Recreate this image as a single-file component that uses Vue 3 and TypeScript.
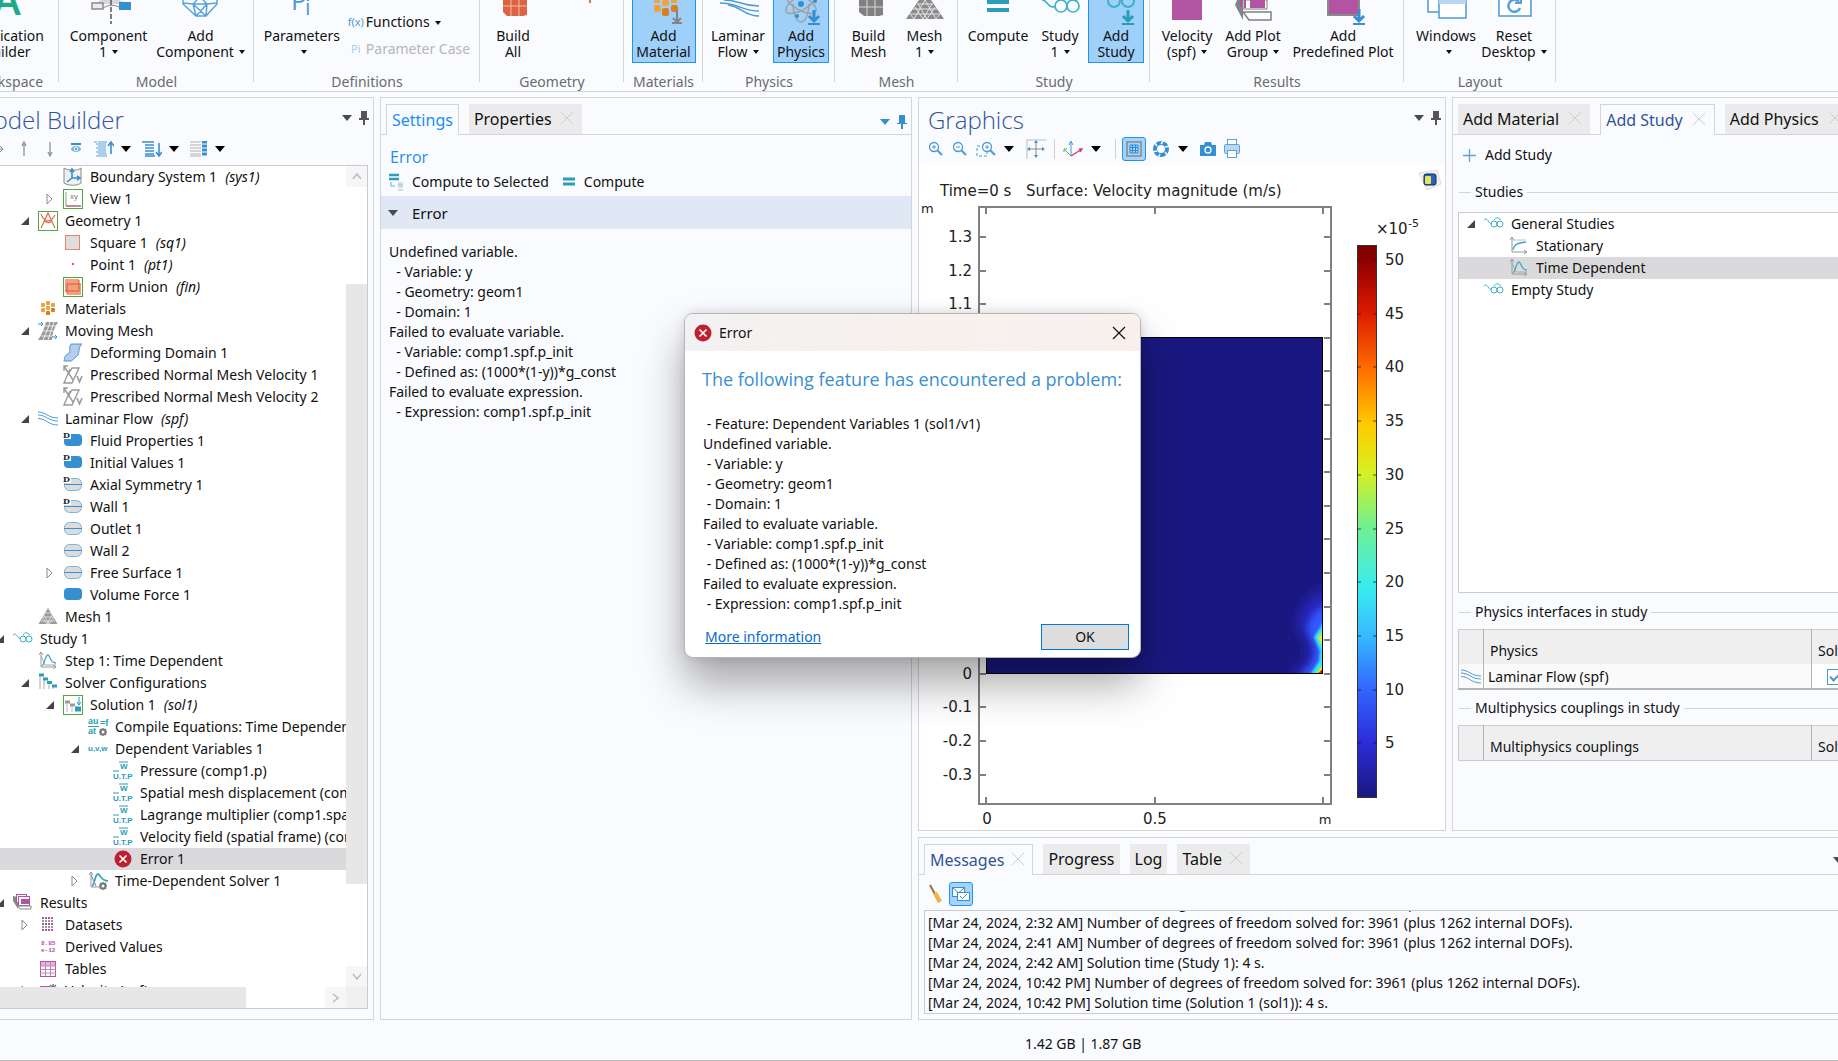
<script setup lang="ts">
import { ref } from 'vue'

interface RibbonButton {
  icon: string
  lines: string[]
  width: number
  caret?: boolean
  active?: boolean
}

interface RibbonGroup {
  label: string
  width: number
  buttons: RibbonButton[]
}

interface TreeNode {
  level: number
  icon: string
  label: string
  tag?: string
  state?: 'open' | 'closed'
  selected?: boolean
}

const ribbonIcons: Record<string, string> = {
  app: '<text x="24" y="15" font-family="Open Sans, sans-serif" font-size="42" font-weight="600" text-anchor="middle" fill="#22a98c">A</text>',
  component:
    '<path d="M8 4 L16 0 H34 L42 4" fill="#d7d7d7"/><rect x="7" y="3" width="11" height="6" fill="#ececec" stroke="#8a8a8a" stroke-width="1.5"/><path d="M18 8 Q26 3 34 7" fill="none" stroke="#8a8a8a"/><rect x="34" y="2" width="12" height="8" fill="#368fd0"/><path d="M26 0V24" stroke="#555" stroke-width="1.5" stroke-dasharray="5 2"/>',
  gem: '<path d="M6 0 L6 4 L19 16 H29 L40 4 V0 M6 3 L16 4 H30 L40 3 M16 4 L20 0 M30 4 L26 0 M16 4 L19 16 M30 4 L29 16 M16 4 L29 16 M30 4 L19 16" fill="none" stroke="#58a4dc" stroke-width="1.5"/>',
  pi: '<text x="13" y="10" font-family="Open Sans, sans-serif" font-size="26" fill="#4a9ad6">P</text><text x="27" y="15" font-family="Open Sans, sans-serif" font-size="22" fill="#4a9ad6">i</text>',
  building: '<path d="M14 0H38V15L34 16H18L14 12Z" fill="#dc6444"/><path d="M22 0V16 M30 0V16 M14 6H38" stroke="#f6b9a5" stroke-width="1"/>',
  tick: '<rect x="26" y="0" width="2" height="3" fill="#b98253"/>',
  material:
    '<g fill="#f0a33a"><rect x="14" y="0" width="6" height="3" rx="1"/><rect x="22" y="0" width="7" height="6" rx="2"/><rect x="31" y="0" width="6" height="3" rx="1"/><rect x="14" y="5" width="7" height="7" rx="2"/></g><g fill="#d8801f"><rect x="22" y="8" width="7" height="8" rx="2"/><rect x="31" y="5" width="7" height="7" rx="2"/></g><path d="M37 10V22 M33 18L37 22L41 18" fill="none" stroke="#808388" stroke-width="2"/><path d="M32 23H42" stroke="#808388" stroke-width="2"/>',
  flow: '<g fill="none" stroke="#4c9bd6" stroke-width="1.5"><path d="M10 0C26 0 26 6 45 6"/><path d="M6 3C24 3 28 11 45 11"/><path d="M14 5C28 7 30 16 45 16"/></g>',
  atom: '<g fill="none" stroke="#a0a0a0" stroke-width="1.5"><ellipse cx="24" cy="3" rx="17" ry="7" transform="rotate(30 24 3)"/><ellipse cx="24" cy="3" rx="17" ry="7" transform="rotate(-30 24 3)"/><path d="M16 4C17 28 31 28 32 4"/></g><circle cx="24" cy="4" r="3" fill="#368fd0"/><circle cx="20" cy="16" r="2" fill="#368fd0"/><circle cx="38" cy="1" r="2" fill="#368fd0"/><path d="M37 10V20 M32 16L37 21L42 16" fill="none" stroke="#368fd0" stroke-width="3"/><path d="M31 24H43" stroke="#368fd0" stroke-width="2"/>',
  buildmesh: '<path d="M14 0H38V15L34 16H19L14 12Z" fill="#808080"/><path d="M22 0V16 M30 0V16 M14 7H38" stroke="#d8d8d8" stroke-width="1"/>',
  mesh: '<path d="M18 0H30L43 19H5Z" fill="#8a8a8a"/><path d="M14 7L22 19L31 4 M34 7L26 19L17 4 M9 14H39 M12 9H36 M16 4H32 M9 14L13 19L24 0L35 19L39 14" fill="none" stroke="#e4e4e4" stroke-width="1"/>',
  equals: '<path d="M13 2H35 M13 10H35" stroke="#2a9db8" stroke-width="4"/>',
  glasses:
    '<g fill="none" stroke="#3fb0c8" stroke-width="1.7"><path d="M6 0C12 0 12 10 20 6"/><circle cx="25" cy="6" r="6"/><circle cx="37" cy="6" r="6"/><path d="M22 0C30 -3 36 -1 40 1"/></g>',
  addstudy:
    '<g fill="none" stroke="#3fb0c8" stroke-width="2"><circle cx="22" cy="1" r="6"/><circle cx="36" cy="1" r="6"/></g><path d="M36 10V20 M31 16L36 21L41 16" fill="none" stroke="#2a9db8" stroke-width="3"/><path d="M30 24H42" stroke="#2a9db8" stroke-width="2"/>',
  plot: '<rect x="9" y="0" width="30" height="20" fill="#b254a2"/>',
  plotgroup:
    '<path d="M6 5L14 20V0H8Z" fill="#808388"/><path d="M14 0H38V9H14Z" fill="#ffffff" stroke="#808080"/><path d="M12 0V7 M16 0V8" stroke="#b254a2" stroke-width="2"/><rect x="21" y="0" width="15" height="8" fill="#b254a2"/><path d="M14 12H42V20H20Z" fill="#fff" stroke="#808080" stroke-width="1.5"/>',
  predefined:
    '<rect x="9" y="-4" width="31" height="19" fill="#b254a2" stroke="#8a8a8a" stroke-width="2"/><path d="M40 9V20 M35 16L40 21L45 16" fill="none" stroke="#368fd0" stroke-width="3"/><path d="M34 24H46" stroke="#368fd0" stroke-width="2"/>',
  windows:
    '<rect x="6" y="-4" width="14" height="16" fill="#fff" stroke="#4a9ad6" stroke-width="1.5"/><rect x="17" y="-4" width="27" height="22" fill="#fff" stroke="#4a9ad6" stroke-width="1.5"/><rect x="17" y="0" width="27" height="4" fill="#b9d6f0"/>',
  reset:
    '<rect x="9" y="-6" width="32" height="22" fill="#fff" stroke="#4a9ad6" stroke-width="1.5"/><path d="M29 2A6 6 0 1 0 30 8" fill="none" stroke="#5a9fd8" stroke-width="2.5"/><path d="M25 3H31V-2" fill="none" stroke="#5a9fd8" stroke-width="2"/>',
}

const ribbon: RibbonGroup[] = [
  { label: 'Workspace', width: 59, buttons: [{ icon: 'app', lines: ['Application', 'Builder'], width: 80 }] },
  {
    label: 'Model',
    width: 195,
    buttons: [
      { icon: 'component', lines: ['Component', '1'], width: 82, caret: true },
      { icon: 'gem', lines: ['Add', 'Component'], width: 90, caret: true },
    ],
  },
  { label: 'Definitions', width: 226, buttons: [{ icon: 'pi', lines: ['Parameters', ''], width: 76, caret: true }] },
  {
    label: 'Geometry',
    width: 144,
    buttons: [
      { icon: 'building', lines: ['Build', 'All'], width: 64 },
      { icon: 'tick', lines: [], width: 72 },
    ],
  },
  { label: 'Materials', width: 79, buttons: [{ icon: 'material', lines: ['Add', 'Material'], width: 64, active: true }] },
  {
    label: 'Physics',
    width: 132,
    buttons: [
      { icon: 'flow', lines: ['Laminar', 'Flow'], width: 58, caret: true },
      { icon: 'atom', lines: ['Add', 'Physics'], width: 56, active: true },
    ],
  },
  {
    label: 'Mesh',
    width: 123,
    buttons: [
      { icon: 'buildmesh', lines: ['Build', 'Mesh'], width: 50 },
      { icon: 'mesh', lines: ['Mesh', '1'], width: 50, caret: true },
    ],
  },
  {
    label: 'Study',
    width: 192,
    buttons: [
      { icon: 'equals', lines: ['Compute'], width: 68 },
      { icon: 'glasses', lines: ['Study', '1'], width: 44, caret: true },
      { icon: 'addstudy', lines: ['Add', 'Study'], width: 56, active: true },
    ],
  },
  {
    label: 'Results',
    width: 254,
    buttons: [
      { icon: 'plot', lines: ['Velocity', '(spf)'], width: 58, caret: true },
      { icon: 'plotgroup', lines: ['Add Plot', 'Group'], width: 62, caret: true },
      { icon: 'predefined', lines: ['Add', 'Predefined Plot'], width: 106 },
    ],
  },
  {
    label: 'Layout',
    width: 152,
    buttons: [
      { icon: 'windows', lines: ['Windows', ''], width: 62, caret: true },
      { icon: 'reset', lines: ['Reset', 'Desktop'], width: 62, caret: true },
    ],
  },
]

const green = '<rect x="0.5" y="0.5" width="19" height="19" fill="#fff" stroke="#4ea83c"/>'
const badgeD = '<rect x="0" y="0" width="8" height="8" fill="#fff"/><text x="0" y="7" font-family="DejaVu Serif, serif" font-size="8" font-weight="700" fill="#222">D</text>'
const domain = '<rect x="1" y="3" width="18" height="12" rx="4" fill="#368fd0"/>'
const boundary = '<rect x="1.5" y="3.5" width="17" height="12" rx="5" fill="#dcdcdc" stroke="#7db2e0"/><path d="M1 9.5H19" stroke="#368fd0"/>'
const waves =
  '<g fill="none" stroke="#4c9bd6"><path d="M0 3C8 3 10 9 20 9"/><path d="M0 6C8 6 10 12 20 12"/><path d="M0 9.500C8 9.500 10 16 20 16"/></g>'
const specs =
  '<g fill="none" stroke="#3fb0c8"><path d="M0 6C4 2 4 11 8 9"/><circle cx="10" cy="10" r="3"/><circle cx="16" cy="10" r="3"/><path d="M10 6C12 3 14 3 17 6"/></g>'
const axes = '<path d="M3 1V16H18 M1 4L3 1L5 4 M15 14L18 16L15 18" fill="none" stroke="#9a9a9a"/>'
const curve = '<path d="M3 5L7 14L18 14" fill="none" stroke="#a8a8a8"/><path d="M4 15C7 13 7 4 10 4C12 4 12 12 18 12" fill="none" stroke="#3fa8c4" stroke-width="1.3"/>'
const gear = '<circle cx="15" cy="15" r="2.500" fill="none" stroke="#777" stroke-width="2"/><path d="M15 11V19 M11 15H19 M12 12L18 18 M18 12L12 18" stroke="#777" stroke-width="1.3"/><circle cx="15" cy="15" r="1.500" fill="#fff"/>'
const normalVelocity =
  '<path d="M7 4L1 18H9L16 3H9L6 8 M1 1L10 15 M1 6V1H5" fill="none" stroke="#9a9a9a" stroke-width="1.400"/><path d="M14 11L16.500 17L19 11" fill="none" stroke="#9a9a9a" stroke-width="1.600"/>'
const variable =
  '<g font-family="Liberation Sans, sans-serif" font-weight="700" fill="#2a9db8" font-size="8"><text x="7" y="8">W</text><text x="0" y="18">U.T.P</text></g><path d="M6 1H15 M0 10H6" stroke="#2a9db8"/>'

const icons: Record<string, string> = {
  boundarySystem:
    '<path d="M1 1V16C6 19 14 19 18 16V1C14 4 6 4 1 1Z" fill="#f0f0f0" stroke="#8a8a8a"/><path d="M9 3V11H17 M9 11L4 15 M7 5L9 2L11 5 M14 9L17 11L14 13" fill="none" stroke="#368fd0" stroke-width="1.600"/>',
  view: green + '<path d="M3 3V17H18" fill="none" stroke="#6fb75f"/><path d="M3 17H18" stroke="#d13a74"/><text x="7" y="10" font-family="Liberation Sans, sans-serif" font-size="8" fill="#777">xy</text>',
  geometry: green + '<path d="M3 17L10 2L17 17 M3 3C6 11 12 13 17 4 M6 10C9 12 12 12 14 10" fill="none" stroke="#df6d4e" stroke-width="1.200"/>',
  square: '<rect x="2.500" y="2.500" width="14" height="14" fill="#dedede" stroke="#e48468"/>',
  point: '<rect x="9" y="8" width="2" height="2" fill="#e05a33"/>',
  union: green + '<rect x="2" y="2" width="14" height="12" fill="#f2a080"/><rect x="4" y="7" width="14" height="11" fill="#f2a080"/><path d="M2 14H16V3 M4 17V7H18" fill="none" stroke="#e0562e"/>',
  materials:
    '<g fill="#f0a33a"><rect x="8" y="2" width="4" height="4" rx="1"/><rect x="3" y="4" width="4" height="4" rx="1"/><rect x="13" y="4" width="4" height="4" rx="1"/><rect x="3" y="9" width="4" height="4" rx="1"/><rect x="8" y="7" width="4" height="4" rx="1"/></g><g fill="#d8801f"><rect x="13" y="9" width="4" height="4" rx="1"/><rect x="8" y="12" width="4" height="4" rx="1"/></g>',
  movingMesh:
    '<path d="M8 1H20C16 8 15 10 14 19H0C4 13 6 8 8 1Z" fill="#9a9a9a"/><path d="M7 5H18 M5 10H16 M3 15H15 M12 1C10 8 8 12 5 19 M16 1C14 8 12 12 10 19" fill="none" stroke="#eee"/><path d="M0 3H5 M3 1L5 3L3 5 M14 16H19 M17 14L19 16L17 18" fill="none" stroke="#368fd0"/>',
  deforming: '<path d="M8 1H19C14 5 18 10 13 14C10 16 9 18 8 18H1C2 14 1 13 5 11C9 8 5 5 8 1Z" fill="#b7cde9" stroke="#4a94d4"/>',
  normalVelocity,
  waves,
  domain,
  domainD: domain + badgeD,
  boundary,
  boundaryD: boundary + badgeD,
  mesh: '<path d="M10 1L19.500 17H0.500Z" fill="#9a9a9a"/><path d="M6 8L11 17L16 10 M14 8L9 17L4 10 M5 10H15 M3 14H17 M7 6H13" fill="none" stroke="#ddd"/>',
  specs,
  timeStep: axes + curve,
  stationary: axes + '<path d="M4 4H17" stroke="#c4c4c4"/><path d="M4 14C5 8 9 7 17 6" fill="none" stroke="#3fa8c4" stroke-width="1.300"/>',
  solver: '<path d="M2 4V16 M6 6V16 M11 10V16 M15 12V16" stroke="#aaa"/><path d="M1 2H6 M5 6H10 M9 9.500H14 M14 13H19" stroke="#2a9db8" stroke-width="3"/>',
  solution: green + '<path d="M2 7H7 M7 10H12" stroke="#9a9a9a" stroke-width="3"/><path d="M4 8V17 M9 11V17" stroke="#bbb"/><path d="M12 14H18" stroke="#2a9db8" stroke-width="5"/><path d="M16 2V10 M14 7L16 10L18 7" fill="none" stroke="#2a9db8"/>',
  compile:
    '<g font-family="Liberation Sans, sans-serif" font-weight="700" fill="#2a9db8" font-size="9"><text x="0" y="7">au</text><text x="0" y="17">at</text><text x="12" y="9">=f</text></g><path d="M0 9.500H11" stroke="#2a9db8"/>' + gear,
  dependent: '<text x="0" y="12" font-family="Liberation Sans, sans-serif" font-size="8" font-weight="700" fill="#2a9db8">u,v,w</text>',
  variable,
  error: '<circle cx="10" cy="10" r="8.500" fill="#bf2030"/><path d="M6.500 6.500L13.500 13.500 M13.500 6.500L6.500 13.500" stroke="#fff" stroke-width="1.700"/>',
  timeSolver: axes + '<path d="M4 15C7 13 7 3 10 3C12 3 13 10 20 10" fill="none" stroke="#3fa8c4" stroke-width="1.800"/><path d="M3 4L8 15" stroke="#999" stroke-width="1.300"/>' + gear,
  results:
    '<path d="M0 8L5 16V4L0 3Z" fill="#8a8a8a"/><rect x="3.500" y="1.500" width="10" height="8" fill="#fff" stroke="#b254a2"/><rect x="5.500" y="3.500" width="11" height="9" fill="#fff" stroke="#b254a2"/><rect x="8" y="6" width="8" height="5" fill="#b254a2"/><path d="M5 13H18V16H7Z" fill="#fff" stroke="#8a8a8a"/>',
  datasets: '<path d="M4 3H16 M4 9H16 M4 15H16" stroke="#b254a2" stroke-width="2" stroke-dasharray="2 1"/><path d="M4 6H16 M4 12H16" stroke="#999" stroke-width="2" stroke-dasharray="2 1"/>',
  derived: '<g font-family="Liberation Mono, monospace" font-weight="700" font-size="6" fill="#b254a2"><text x="3" y="8">8.85</text><text x="3" y="15">e-12</text></g>',
  tables: '<rect x="2.500" y="2.500" width="15" height="15" fill="#fff" stroke="#b254a2"/><rect x="3" y="3" width="14" height="4" fill="#dfb6d8"/><path d="M2 7H18 M2 10.500H18 M2 14H18 M7.500 3V17 M12.500 3V17" stroke="#c583bb"/>',
  velocity: '<rect x="2" y="5" width="10" height="10" fill="#b254a2"/><path d="M15 3V11 M11 7H19 M12 4L18 10 M18 4L12 10" stroke="#777" stroke-width="1.500"/>',
}

const tree: TreeNode[] = [
  { level: 2, icon: 'boundarySystem', label: 'Boundary System 1', tag: 'sys1' },
  { level: 2, icon: 'view', label: 'View 1', state: 'closed' },
  { level: 1, icon: 'geometry', label: 'Geometry 1', state: 'open' },
  { level: 2, icon: 'square', label: 'Square 1', tag: 'sq1' },
  { level: 2, icon: 'point', label: 'Point 1', tag: 'pt1' },
  { level: 2, icon: 'union', label: 'Form Union', tag: 'fin' },
  { level: 1, icon: 'materials', label: 'Materials' },
  { level: 1, icon: 'movingMesh', label: 'Moving Mesh', state: 'open' },
  { level: 2, icon: 'deforming', label: 'Deforming Domain 1' },
  { level: 2, icon: 'normalVelocity', label: 'Prescribed Normal Mesh Velocity 1' },
  { level: 2, icon: 'normalVelocity', label: 'Prescribed Normal Mesh Velocity 2' },
  { level: 1, icon: 'waves', label: 'Laminar Flow', tag: 'spf', state: 'open' },
  { level: 2, icon: 'domainD', label: 'Fluid Properties 1' },
  { level: 2, icon: 'domainD', label: 'Initial Values 1' },
  { level: 2, icon: 'boundaryD', label: 'Axial Symmetry 1' },
  { level: 2, icon: 'boundaryD', label: 'Wall 1' },
  { level: 2, icon: 'boundary', label: 'Outlet 1' },
  { level: 2, icon: 'boundary', label: 'Wall 2' },
  { level: 2, icon: 'boundary', label: 'Free Surface 1', state: 'closed' },
  { level: 2, icon: 'domain', label: 'Volume Force 1' },
  { level: 1, icon: 'mesh', label: 'Mesh 1' },
  { level: 0, icon: 'specs', label: 'Study 1', state: 'open' },
  { level: 1, icon: 'timeStep', label: 'Step 1: Time Dependent' },
  { level: 1, icon: 'solver', label: 'Solver Configurations', state: 'open' },
  { level: 2, icon: 'solution', label: 'Solution 1', tag: 'sol1', state: 'open' },
  { level: 3, icon: 'compile', label: 'Compile Equations: Time Dependent' },
  { level: 3, icon: 'dependent', label: 'Dependent Variables 1', state: 'open' },
  { level: 4, icon: 'variable', label: 'Pressure (comp1.p)' },
  { level: 4, icon: 'variable', label: 'Spatial mesh displacement (comp1.spatial.disp)' },
  { level: 4, icon: 'variable', label: 'Lagrange multiplier (comp1.spatial.lm)' },
  { level: 4, icon: 'variable', label: 'Velocity field (spatial frame) (comp1.u)' },
  { level: 4, icon: 'error', label: 'Error 1', selected: true },
  { level: 3, icon: 'timeSolver', label: 'Time-Dependent Solver 1', state: 'closed' },
  { level: 0, icon: 'results', label: 'Results', state: 'open' },
  { level: 1, icon: 'datasets', label: 'Datasets', state: 'closed' },
  { level: 1, icon: 'derived', label: 'Derived Values' },
  { level: 1, icon: 'tables', label: 'Tables' },
  { level: 1, icon: 'velocity', label: 'Velocity (spf)', state: 'closed' },
]

const studies: TreeNode[] = [
  { level: 0, icon: 'specs', label: 'General Studies', state: 'open' },
  { level: 1, icon: 'stationary', label: 'Stationary' },
  { level: 1, icon: 'timeStep', label: 'Time Dependent', selected: true },
  { level: 0, icon: 'specs', label: 'Empty Study' },
]

const errorText = `Undefined variable.
  - Variable: y
  - Geometry: geom1
  - Domain: 1
Failed to evaluate variable.
  - Variable: comp1.spf.p_init
  - Defined as: (1000*(1-y))*g_const
Failed to evaluate expression.
  - Expression: comp1.spf.p_init`

const dialogText = ' - Feature: Dependent Variables 1 (sol1/v1)\n' + errorText.replace(/^ {2}-/gm, ' -')

const messages = [
  '[Mar 24, 2024, 2:31 AM] Number of degrees of freedom solved for: 3961 (plus 1262 internal DOFs).',
  '[Mar 24, 2024, 2:32 AM] Number of degrees of freedom solved for: 3961 (plus 1262 internal DOFs).',
  '[Mar 24, 2024, 2:41 AM] Number of degrees of freedom solved for: 3961 (plus 1262 internal DOFs).',
  '[Mar 24, 2024, 2:42 AM] Solution time (Study 1): 4 s.',
  '[Mar 24, 2024, 10:42 PM] Number of degrees of freedom solved for: 3961 (plus 1262 internal DOFs).',
  '[Mar 24, 2024, 10:42 PM] Solution time (Solution 1 (sol1)): 4 s.',
]

const solveLaminar = ref(true)
const dialogOpen = ref(true)

const yTicks = Array.from({ length: 17 }, (_, i) => {
  const value = 13 - i
  return {
    y: Math.round(72 + i * 33.6),
    label: value % 10 === 0 ? String(value / 10) : (value / 10).toFixed(1),
    covered: value > 0 && value <= 10,
  }
})
const xTicks = [67, 236, 404]
const barTicks = [50, 45, 40, 35, 30, 25, 20, 15, 10, 5].map((value, i) => ({ value, y: Math.round(95 + i * 53.7) }))
const barStops = [
  ['0%', '#780000'],
  ['3%', '#900000'],
  ['12%', '#dc1a00'],
  ['22%', '#ff6a00'],
  ['32%', '#ffc800'],
  ['41%', '#d8f020'],
  ['51%', '#70f090'],
  ['62%', '#38ecf0'],
  ['71%', '#35b8ff'],
  ['80%', '#3268ff'],
  ['90%', '#2c2cd8'],
  ['100%', '#1a1880'],
]
</script>

<template>
  <div class="app">
    <header class="ribbon">
      <section v-for="group in ribbon" :key="group.label" class="group" :style="{ width: group.width + 'px' }">
        <div class="group-buttons" :class="{ clipped: group.label === 'Workspace' }">
          <button v-for="b in group.buttons" :key="b.icon" type="button" class="big" :class="{ active: b.active }" :style="{ width: b.width + 'px' }">
            <svg width="48" height="26" viewBox="0 0 48 26" v-html="ribbonIcons[b.icon]"></svg>
            <span v-for="(line, i) in b.lines" :key="i" class="big-line">{{ line }}<i v-if="b.caret && i === b.lines.length - 1" class="caret small"></i></span>
          </button>
          <div v-if="group.label === 'Definitions'" class="stack">
            <button type="button" class="inline-tool"><span class="glyph">f(x)</span>Functions<i class="caret small"></i></button>
            <button type="button" class="inline-tool" disabled><span class="glyph">Pi</span>Parameter Case</button>
          </div>
        </div>
        <div class="group-label">{{ group.label }}</div>
      </section>
    </header>

    <main class="desk">
      <section class="panel model">
        <div class="panel-head">
          <h2 class="model-title">Model Builder</h2>
          <span class="window-tools"><i class="caret dark"></i><svg class="pin" width="10" height="14" viewBox="0 0 10 14"><path d="M2 0H8V7H10V9H6V14H4V9H0V7H2Z" fill="#555" /></svg></span>
        </div>
        <div class="toolbar model-tools">
          <button type="button" class="step" aria-label="Forward"><svg width="16" height="16"><path d="M0 8H13 M10 5L13 8L10 11" fill="none" stroke="#8a8a8a" /></svg></button>
          <button type="button" class="step" aria-label="Move up"><svg width="16" height="16"><path d="M8 2V15 M6 5L8 1L10 5" fill="none" stroke="#999" stroke-width="1.4" /></svg></button>
          <button type="button" class="step" aria-label="Move down"><svg width="16" height="16"><path d="M8 1V14 M6 11L8 15L10 11" fill="none" stroke="#999" stroke-width="1.4" /></svg></button>
          <button type="button" class="step" aria-label="Show"><svg width="16" height="16"><path d="M3 3H13" stroke="#368fd0" stroke-width="2" /><ellipse cx="8" cy="8" rx="5" ry="3" fill="#7fb8e4" /><circle cx="8" cy="8" r="2" fill="#fff" /><circle cx="8" cy="8" r="1" fill="#2f7fc0" /></svg></button>
          <button type="button" aria-label="Collapse all"><svg width="20" height="16"><path d="M0 1H3 M4 1H13 M2 3H12 M4 5H12 M2 7H12 M4 9H12 M2 11H12 M4 13H13 M2 15H13" stroke="#5aa3da" /><path d="M17 2V13 M14 5L17 1L20 5" fill="none" stroke="#368fd0" stroke-width="1.6" /></svg></button>
          <i class="caret black"></i>
          <button type="button" aria-label="Expand all"><svg width="20" height="16"><path d="M0 1H12 M3 4H12 M3 7H12 M3 10H12 M3 13H12 M3 15H13" stroke="#368fd0" stroke-width="1.6" /><path d="M17 2V14 M14 11L17 15L20 11" fill="none" stroke="#368fd0" stroke-width="1.6" /></svg></button>
          <i class="caret black"></i>
          <button type="button" aria-label="Columns"><svg width="18" height="16"><path d="M0 1H11 M0 4H11 M0 7H11 M0 10H11 M0 13H11 M0 15H11" stroke="#b0b0b0" /><path d="M12 1H17 M12 5H17 M12 9H17 M12 13H17" stroke="#368fd0" stroke-width="3" /></svg></button>
          <i class="caret black"></i>
        </div>
        <div class="tree-box">
          <div class="tree-view">
            <ul class="tree">
              <li v-for="(n, i) in tree" :key="i" :class="{ selected: n.selected }">
                <span class="row" :style="{ paddingLeft: n.level * 25 + 'px' }">
                  <span class="twisty">
                    <svg v-if="n.state" width="10" height="12" viewBox="0 0 10 12"><path v-if="n.state === 'open'" d="M9 2V10H1Z" fill="#444" /><path v-else d="M2 1V11L7 6Z" fill="#fff" stroke="#8a8a8a" /></svg>
                  </span>
                  <svg class="node-icon" width="20" height="20" viewBox="0 0 20 20" v-html="icons[n.icon]"></svg>
                  <span class="node-label">{{ n.label }}<em v-if="n.tag">({{ n.tag }})</em></span>
                </span>
              </li>
            </ul>
          </div>
          <div class="vbar">
            <span class="bar-button"><svg width="10" height="7"><path d="M1 6L5 1L9 6" fill="none" stroke="#bdbdbd" stroke-width="1.5" /></svg></span>
            <span class="vthumb"></span>
            <span class="bar-button"><svg width="10" height="7"><path d="M1 1L5 6L9 1" fill="none" stroke="#bdbdbd" stroke-width="1.5" /></svg></span>
          </div>
          <div class="hbar">
            <span class="hthumb"></span>
            <span class="bar-button"><svg width="7" height="10"><path d="M1 1L6 5L1 9" fill="none" stroke="#bdbdbd" stroke-width="1.5" /></svg></span>
          </div>
          <div class="bar-corner"></div>
        </div>
      </section>

      <section class="panel settings">
        <div class="tabs" role="tablist">
          <button type="button" role="tab" class="tab current bright">Settings</button>
          <button type="button" role="tab" class="tab">Properties<span class="x"></span></button>
          <span class="window-tools blue"><i class="caret"></i><svg class="pin" width="10" height="14" viewBox="0 0 10 14"><path d="M2 0H8V8H10V9H6V14H4V9H0V8H2Z" fill="#368fd0" /></svg></span>
        </div>
        <h3 class="settings-title">Error</h3>
        <div class="settings-tools">
          <button type="button"><svg width="15" height="18"><path d="M0 2H10 M0 6H10" stroke="#2a9db8" stroke-width="2.5" /><path d="M2 9V13H6 M9 12H14" fill="none" stroke="#5ab4c8" /><path d="M9 10H14 M9 14H14 M9 17H14" stroke="#bbb" /></svg>Compute to Selected</button>
          <button type="button"><svg width="13" height="12"><path d="M0 3H12 M0 8H12" stroke="#2a9db8" stroke-width="3" /></svg>Compute</button>
        </div>
        <button type="button" class="section-bar"><i class="caret dark"></i>Error</button>
        <pre class="error-text">{{ errorText }}</pre>
      </section>

      <div class="right">
        <section class="panel graphics">
          <div class="panel-head">
            <h2>Graphics</h2>
            <span class="window-tools"><i class="caret dark"></i><svg class="pin" width="10" height="14" viewBox="0 0 10 14"><path d="M2 0H8V7H10V9H6V14H4V9H0V7H2Z" fill="#555" /></svg></span>
          </div>
          <div class="toolbar plot-tools">
            <button type="button" aria-label="Zoom in"><svg width="16" height="16"><circle cx="6" cy="6" r="4.500" fill="none" stroke="#4a9ad6" stroke-width="1.3" /><path d="M9 9L14 14" stroke="#4a9ad6" stroke-width="2" /><path d="M4 6H8 M6 4V8" stroke="#4a9ad6" /></svg></button>
            <button type="button" aria-label="Zoom out"><svg width="16" height="16"><circle cx="6" cy="6" r="4.500" fill="none" stroke="#4a9ad6" stroke-width="1.3" /><path d="M9 9L14 14" stroke="#4a9ad6" stroke-width="2" /><path d="M4 6H8" stroke="#4a9ad6" /></svg></button>
            <button type="button" aria-label="Zoom box"><svg width="20" height="16"><rect x="1" y="5" width="10" height="10" fill="none" stroke="#4a9ad6" stroke-dasharray="3 2" /><circle cx="11" cy="6" r="4.500" fill="#fff" stroke="#4a9ad6" stroke-width="1.3" /><path d="M14 9L19 14" stroke="#4a9ad6" stroke-width="2" /><path d="M9 6H13 M11 4V8" stroke="#4a9ad6" /></svg></button>
            <i class="caret black"></i>
            <button type="button" aria-label="Zoom extents"><svg width="20" height="20"><path d="M1 20V1H20" fill="none" stroke="#bbb" /><path d="M10 4V16 M4 10H16" stroke="#888" /><path d="M8 4L10 1L12 4Z M8 16L10 19L12 16Z M4 8L1 10L4 12Z M16 8L19 10L16 12Z" fill="#368fd0" /></svg></button>
            <span class="divider"></span>
            <button type="button" aria-label="View axes"><svg width="20" height="18"><path d="M8 16V2 M6 5L8 1L10 5" fill="none" stroke="#4a9ad6" /><path d="M8 16L1 9 M1 12V9H4" fill="none" stroke="#62b05a" /><path d="M8 16L19 9 M16 9L19 9L17 12" fill="none" stroke="#d13a74" stroke-width="1.300" /></svg></button>
            <i class="caret black"></i>
            <span class="divider"></span>
            <button type="button" aria-label="Grid" class="pressed"><svg width="16" height="16"><rect x="1" y="1" width="14" height="14" fill="none" stroke="#888" stroke-width="1.500" /><path d="M4 4H12V12H4Z M4 6.500H12 M4 9.500H12 M6.500 4V12 M9.500 4V12" fill="none" stroke="#2f8ad0" /></svg></button>
            <button type="button" aria-label="Transparency"><svg width="18" height="18"><circle cx="9" cy="9" r="6" fill="none" stroke="#368fd0" stroke-width="4" /><path d="M9 4L12 0 M13 7L18 6 M13 12L16 16 M8 14L6 18 M5 11L0 12 M5 6L2 2" stroke="#fafbff" stroke-width="1.500" /></svg></button>
            <i class="caret black"></i>
            <button type="button" aria-label="Image snapshot"><svg width="16" height="14"><path d="M0 3H4L5 0H11L12 3H16V14H0Z" fill="#368fd0" /><circle cx="8" cy="8" r="3" fill="none" stroke="#fff" stroke-width="1.300" /></svg></button>
            <button type="button" aria-label="Print"><svg width="16" height="20"><rect x="3.500" y="0.500" width="9" height="7" fill="#fff" stroke="#5aa3da" /><rect x="0.500" y="5.500" width="15" height="9" rx="1" fill="#b9d6f0" stroke="#5aa3da" /><rect x="3.500" y="11.500" width="9" height="7" fill="#fff" stroke="#5aa3da" /></svg></button>
          </div>
          <svg class="plot" viewBox="0 0 526 665" preserveAspectRatio="xMinYMin meet">
            <defs>
              <linearGradient id="scale" x1="0" y1="0" x2="0" y2="1">
                <stop v-for="s in barStops" :key="s[0]" :offset="s[0]" :stop-color="s[1]" />
              </linearGradient>
              <filter id="soft" x="-50%" y="-50%" width="200%" height="200%"><feGaussianBlur stdDeviation="7" /></filter>
              <filter id="fine" x="-50%" y="-50%" width="200%" height="200%"><feGaussianBlur stdDeviation="3" /></filter>
              <filter id="sharp" x="-50%" y="-50%" width="200%" height="200%"><feGaussianBlur stdDeviation="1" /></filter>
              <clipPath id="field"><rect x="67" y="172" width="337" height="337" /></clipPath>
            </defs>
            <g clip-path="url(#field)">
              <rect x="67" y="172" width="337" height="337" fill="#1a1880" />
              <path d="M410 422L390 435L378 458L390 478L390 495L370 514H410Z" fill="#2b2ac8" filter="url(#soft)" />
              <path d="M408 438L394 450L388 464L396 484L393 498L380 511H408Z" fill="#3058ff" filter="url(#fine)" />
              <path d="M406 452L401 463L395 472L401 486L400 496L391 510H406Z" fill="#38e4f0" filter="url(#sharp)" />
              <path d="M405 465L399 473L405 483Z M405 498L396 510H405Z" fill="#e8f020" filter="url(#sharp)" />
              <path d="M405 503L398 509H405Z" fill="#e02000" />
            </g>
            <rect x="67.500" y="172.500" width="336" height="336" fill="none" stroke="#000" />
            <g stroke="#808080" stroke-width="2" fill="none">
              <rect x="60" y="42" width="352" height="597" />
              <path v-for="t in yTicks" :key="t.label" :d="`M60 ${t.y}h7M412 ${t.y}h-7`" />
              <path v-for="x in xTicks" :key="x" :d="`M${x} 42v7M${x} 639v-7`" />
            </g>
            <g class="ticks">
              <template v-for="t in yTicks" :key="t.label">
                <text v-if="!dialogOpen || !t.covered" x="53" :y="t.y + 5" text-anchor="end">{{ t.label }}</text>
              </template>
              <text x="68" y="659" text-anchor="middle">0</text>
              <text x="236" y="659" text-anchor="middle">0.5</text>
              <text x="406" y="659" text-anchor="middle" class="unit">m</text>
              <text x="2" y="48" class="unit">m</text>
              <text x="21" y="31">Time=0 s</text>
              <text x="107" y="31">Surface: Velocity magnitude (m/s)</text>
              <text x="457" y="69">×10</text>
              <text x="489" y="62" class="power">-5</text>
              <text v-for="t in barTicks" :key="t.value" x="466" :y="t.y + 5">{{ t.value }}</text>
            </g>
            <rect x="438.500" y="80.500" width="19" height="552" fill="url(#scale)" stroke="#333" />
            <path v-for="t in barTicks" :key="t.value" :d="`M438 ${t.y}h4M458 ${t.y}h-4`" stroke="#111" stroke-opacity="0.700" />
            <path d="M500 8L518 5L522 19L508 25Z" fill="#f1f1f1" stroke="#ddd" />
            <rect x="505" y="9" width="12" height="11" rx="2" fill="#2a62b8" stroke="#0d2860" />
            <rect x="506" y="11" width="6" height="8" rx="1" fill="#e8e060" />
          </svg>
        </section>

        <section class="panel studies">
          <div class="tabs" role="tablist">
            <button type="button" role="tab" class="tab">Add Material<span class="x"></span></button>
            <button type="button" role="tab" class="tab current">Add Study<span class="x"></span></button>
            <button type="button" role="tab" class="tab">Add Physics<span class="x"></span></button>
          </div>
          <button type="button" class="add-study"><svg width="13" height="13"><path d="M0 6.500H13 M6.500 0V13" stroke="#5aa3da" stroke-width="1.300" /></svg>Add Study</button>
          <h4 class="rule first">Studies</h4>
          <ul class="tree study-list">
            <li v-for="n in studies" :key="n.label" :class="{ selected: n.selected }">
              <span class="row" :style="{ paddingLeft: n.level * 25 + 'px' }">
                <span class="twisty"><svg v-if="n.state" width="10" height="12" viewBox="0 0 10 12"><path d="M9 2V10H1Z" fill="#444" /></svg></span>
                <svg class="node-icon" width="20" height="20" viewBox="0 0 20 20" v-html="icons[n.icon]"></svg>
                <span class="node-label">{{ n.label }}</span>
              </span>
            </li>
          </ul>
          <h4 class="rule">Physics interfaces in study</h4>
          <table class="grid closed">
            <colgroup><col class="c-icon" /><col class="c-name" /><col class="c-solve" /></colgroup>
            <thead><tr><th></th><th>Physics</th><th>Solve</th></tr></thead>
            <tbody>
              <tr>
                <td class="icon-cell"><svg width="20" height="20" viewBox="0 0 20 20" v-html="icons.waves"></svg></td>
                <td>Laminar Flow (spf)</td>
                <td class="check-cell"><input v-model="solveLaminar" type="checkbox" aria-label="Solve Laminar Flow" /></td>
              </tr>
            </tbody>
          </table>
          <h4 class="rule">Multiphysics couplings in study</h4>
          <table class="grid">
            <colgroup><col class="c-icon" /><col class="c-name" /><col class="c-solve" /></colgroup>
            <thead><tr><th></th><th>Multiphysics couplings</th><th>Solve</th></tr></thead>
          </table>
        </section>

        <section class="panel log">
          <div class="tabs" role="tablist">
            <button type="button" role="tab" class="tab current">Messages<span class="x"></span></button>
            <button type="button" role="tab" class="tab">Progress</button>
            <button type="button" role="tab" class="tab">Log</button>
            <button type="button" role="tab" class="tab">Table<span class="x"></span></button>
            <span class="window-tools edge"><i class="caret dark"></i></span>
          </div>
          <div class="log-tools">
            <button type="button" aria-label="Clear"><svg width="16" height="20"><path d="M2 1L7 10" stroke="#a06a3a" stroke-width="2" /><path d="M5 10L9 8L14 17L10 19Z" fill="#f2b24a" /></svg></button>
            <button type="button" aria-label="Show messages" class="pressed"><svg width="18" height="16"><rect x="0.500" y="1.500" width="12" height="9" fill="#fff" stroke="#368fd0" /><path d="M1 2L6.500 7L12 2" fill="none" stroke="#368fd0" /><rect x="5.500" y="6.500" width="12" height="8" fill="#fff" stroke="#368fd0" /><path d="M8 10L10.500 12.500L15 8" fill="none" stroke="#368fd0" /></svg></button>
          </div>
          <div class="messages">
            <div class="message-list">
              <p v-for="m in messages" :key="m">{{ m }}</p>
            </div>
          </div>
        </section>
      </div>
    </main>

    <footer class="status"><span>1.42 GB | 1.87 GB</span></footer>

    <div v-if="dialogOpen" class="dialog" role="dialog" aria-labelledby="dialog-title">
      <div class="dialog-bar">
        <svg width="18" height="18" viewBox="1 1 18 18" v-html="icons.error"></svg>
        <span id="dialog-title">Error</span>
        <button type="button" aria-label="Close" @click="dialogOpen = false"><svg width="14" height="14"><path d="M1 1L13 13 M13 1L1 13" stroke="#111" stroke-width="1.200" /></svg></button>
      </div>
      <h3>The following feature has encountered a problem:</h3>
      <pre>{{ dialogText }}</pre>
      <div class="dialog-foot">
        <a href="#">More information</a>
        <button type="button" @click="dialogOpen = false">OK</button>
      </div>
    </div>
  </div>
</template>

<style>
body {
  margin: 0;
  background: #fafbff;
}
</style>

<style scoped>
.app {
  position: relative;
  display: flex;
  flex-direction: column;
  min-height: 100vh;
  box-sizing: border-box;
  overflow: hidden;
  background: #fafbff;
  border-bottom: 1px solid #bdbcb4;
  color: #111;
  font: 14px/20px 'Noto Sans', 'Open Sans', sans-serif;
}
button {
  margin: 0;
  padding: 0;
  border: 0;
  background: none;
  color: inherit;
  font: inherit;
}
h2,
h3,
h4,
p,
pre,
ul {
  margin: 0;
  padding: 0;
  font: inherit;
}
svg {
  display: block;
  flex: none;
}
.caret {
  display: inline-block;
  flex: none;
  width: 0;
  height: 0;
  border: 5px solid transparent;
  border-top: 6px solid currentColor;
  border-bottom: 0;
}
.caret.small {
  margin-left: 5px;
  border-width: 4px 3px 0;
  vertical-align: 3px;
}
.caret.dark {
  color: #4a4a4a;
}
.caret.black {
  color: #000;
}

/* Ribbon */
.ribbon {
  display: flex;
  flex: none;
  overflow: hidden;
  border-bottom: 1px solid #d3d5d9;
}
.group {
  position: relative;
  flex: none;
  box-sizing: border-box;
}
.group::after {
  content: '';
  position: absolute;
  right: 0;
  top: 0;
  bottom: 9px;
  width: 1px;
  background: #d3d5d9;
}
.group-buttons {
  display: flex;
  justify-content: center;
  gap: 6px;
  height: 63px;
}
.clipped,
.clipped + .group-label {
  margin-left: -45px;
}
.big {
  display: flex;
  flex: none;
  flex-direction: column;
  align-items: center;
  box-sizing: border-box;
  border: 1px solid transparent;
  border-top: 0;
  white-space: nowrap;
}
.big svg {
  margin-bottom: 2px;
}
.big-line {
  height: 16px;
  line-height: 16px;
}
.big.active {
  background: #9fd0f9;
  border-color: #1f93ee;
}
.stack {
  display: flex;
  flex-direction: column;
  align-items: flex-start;
  gap: 7px;
  padding-top: 12px;
}
.inline-tool {
  display: flex;
  align-items: center;
  white-space: nowrap;
}
.inline-tool .caret {
  margin-top: 1px;
}
.inline-tool:disabled {
  color: #b4b6ba;
}
.glyph {
  width: 20px;
  color: #4a9ad6;
  font-size: 11px;
  text-align: center;
}
.inline-tool:disabled .glyph {
  color: #a9cbe8;
}
.group-label {
  height: 18px;
  padding-top: 10px;
  color: #6b6b6b;
  line-height: 18px;
  text-align: center;
}

/* Panels */
.desk {
  display: grid;
  flex: 1;
  grid-template-columns: minmax(0, 374fr) minmax(0, 532fr) minmax(0, 920fr);
  gap: 6px;
  padding-top: 5px;
}
.right {
  display: grid;
  grid-template-columns: minmax(0, 528fr) minmax(0, 386fr);
  grid-template-rows: minmax(0, 734fr) minmax(0, 183fr);
  gap: 6px;
}
.panel {
  display: flex;
  flex-direction: column;
  box-sizing: border-box;
  min-width: 0;
  overflow: hidden;
  border: 1px solid #d3d5d9;
}
.model {
  border-left: 0;
}
.studies,
.log {
  border-right: 0;
}
.log {
  grid-column: 1 / -1;
}
.panel-head {
  display: flex;
  flex: none;
  justify-content: space-between;
  height: 38px;
  padding-left: 9px;
  white-space: nowrap;
}
h2 {
  color: #2f5597;
  font-family: 'Open Sans', 'Noto Sans', sans-serif;
  font-size: 24px;
  font-weight: 300;
  line-height: 44px;
}
.model-title {
  margin-left: -36px;
}
.window-tools {
  display: flex;
  align-items: center;
  align-self: flex-start;
  gap: 7px;
  height: 40px;
  padding-right: 4px;
}
.tabs .window-tools {
  height: 36px;
  margin-left: auto;
}
.window-tools.blue {
  color: #368fd0;
}
.tabs .edge {
  height: 32px;
  margin-right: -9px;
}
.toolbar {
  display: flex;
  flex: none;
  align-items: center;
  gap: 7px;
  height: 26px;
  margin-bottom: 3px;
}
.model-tools {
  margin-left: -10px;
}
.model-tools .step {
  margin-right: 3px;
}
.toolbar .caret + button {
  margin-left: 4px;
}
.toolbar .caret + .divider {
  margin-left: 6px;
}
.divider {
  width: 1px;
  height: 20px;
  background: #cfd1d5;
}
.plot-tools {
  gap: 8px;
  padding-left: 9px;
}
.plot-tools .pressed {
  margin: 0 -2px;
}
.pressed {
  display: flex;
  align-items: center;
  justify-content: center;
  box-sizing: border-box;
  width: 24px;
  height: 24px;
  border: 1px solid #1f93ee;
  border-radius: 3px;
  background: #a5d3fa;
}

/* Trees */
.tree-box {
  display: grid;
  flex: 1;
  grid-template-columns: minmax(0, 1fr) 21px;
  grid-template-rows: minmax(0, 1fr) 21px;
  min-height: 0;
  margin: 0 5px 10px 0;
  border: 1px solid #c9cbd0;
  border-left: 0;
  background: #fff;
}
.tree-view {
  position: relative;
  min-height: 700px;
  overflow: hidden;
}
.tree-view .tree {
  position: absolute;
  inset: 0 0 auto -5px;
}
.tree {
  list-style: none;
}
.tree li {
  height: 22px;
  white-space: nowrap;
}
.tree .selected {
  background: #dadadc;
}
.row {
  display: flex;
  align-items: center;
  height: 22px;
}
.twisty {
  flex: none;
  width: 18px;
}
.node-icon {
  margin-right: 7px;
  overflow: visible;
}
.node-label em {
  margin-left: 8px;
}
.vbar {
  display: flex;
  flex-direction: column;
}
.vthumb {
  flex: 1;
  margin: 97px 0 82px;
  background: #e7e7e7;
}
.hbar {
  display: flex;
  justify-content: space-between;
}
.hthumb {
  width: 71%;
  background: #e7e7e7;
}
.bar-button {
  display: flex;
  flex: none;
  align-items: center;
  justify-content: center;
  width: 21px;
  height: 21px;
  background: #f6f6f6;
}
.bar-corner {
  background: #f0f0f0;
}

/* Tabs */
.tabs {
  display: flex;
  flex: none;
  box-sizing: border-box;
  height: 37px;
  padding: 6px 0 0 5px;
  box-shadow: inset 0 -1px #d3d5d9;
}
.tab {
  display: flex;
  flex: none;
  align-items: center;
  box-sizing: border-box;
  height: 30px;
  margin-right: 10px;
  padding: 0 5px;
  background: #ebebeb;
  font-size: 16px;
  white-space: nowrap;
}
.tab.current {
  height: 31px;
  border: 1px solid #d3d5d9;
  border-bottom: 0;
  background: #fafbff;
  color: #2f5597;
}
.tab.bright {
  color: #1b8fee;
}
.x {
  width: 12px;
  height: 12px;
  margin: 0 4px 2px 9px;
  background:
    linear-gradient(45deg, transparent 46%, #c8ced8 46% 54%, transparent 54%),
    linear-gradient(-45deg, transparent 46%, #c8ced8 46% 54%, transparent 54%);
}
.studies .x {
  margin-left: 10px;
}
.log .x {
  margin-left: 8px;
  margin-right: 3px;
}

/* Settings */
.settings-title {
  padding: 12px 0 0 9px;
  color: #1b8fee;
  font-family: 'Open Sans', 'Noto Sans', sans-serif;
  font-size: 16px;
}
.settings-tools {
  display: flex;
  gap: 14px;
  padding: 5px 0 0 8px;
}
.settings-tools button {
  display: flex;
  align-items: center;
  gap: 8px;
}
.section-bar {
  display: flex;
  align-items: center;
  gap: 14px;
  height: 33px;
  margin-top: 4px;
  padding-left: 7px;
  background: #dfe8f4;
  font-size: 15px;
}
.error-text {
  padding: 13px 0 0 8px;
}

/* Graphics */
.plot {
  flex: 1;
  width: 100%;
  min-height: 0;
  background: #fff;
}
.ticks {
  fill: #222;
  font: 15px 'DejaVu Sans', sans-serif;
}
.unit {
  font-size: 13px;
}
.power {
  font-size: 11px;
}

/* Studies */
.add-study {
  display: flex;
  align-items: center;
  gap: 9px;
  padding: 10px 0 0 10px;
}
.rule {
  display: flex;
  align-items: center;
  gap: 4px;
  padding: 0 0 0 6px;
  white-space: nowrap;
}
.rule::before,
.rule::after {
  content: '';
  flex: 1;
  height: 1px;
  background: #d3d5d9;
}
.rule::before {
  flex: none;
  width: 12px;
}
.rule.first {
  margin-top: 17px;
}
.study-list {
  flex: 1;
  min-height: 0;
  margin: 10px -2px 9px 5px;
  border: 1px solid #c9cbd0;
  background: #fff;
}
.study-list .row {
  margin-left: 7px;
}
.grid {
  flex: none;
  width: 440px;
  margin: 7px 0 8px 5px;
  border-collapse: collapse;
  table-layout: fixed;
  border: 1px solid #c9cbd0;
  background: #fafafa;
  text-align: left;
}
.grid.closed {
  border-bottom: 2px solid #b4b4b4;
}
.c-icon {
  width: 25px;
}
.c-name {
  width: 328px;
}
.grid th {
  height: 26px;
  padding: 8px 0 0 6px;
  border-right: 1px solid #b4b4b4;
  background: #efefef;
  font-weight: 400;
}
.grid td {
  height: 23px;
  padding: 1px 0 0 4px;
  border-right: 1px solid #b4b4b4;
}
.grid .icon-cell {
  padding-left: 2px;
}
.grid .check-cell {
  padding-left: 15px;
  background: #fff;
}
.check-cell input {
  display: block;
  appearance: none;
  box-sizing: border-box;
  width: 16px;
  height: 16px;
  margin: 0;
  border: 1px solid #4a9ad6;
  background: #fff;
}
.check-cell input:checked::after {
  content: '';
  display: block;
  width: 8px;
  height: 4px;
  margin: 3px 0 0 2px;
  border: solid #4a9ad6;
  border-width: 0 0 2px 2px;
  transform: rotate(-45deg);
}
.panel.studies {
  padding-bottom: 61px;
}

/* Messages */
.log-tools {
  display: flex;
  align-items: center;
  gap: 5px;
  padding: 7px 0 4px 9px;
}
.messages {
  position: relative;
  flex: 1;
  min-height: 80px;
  margin: 0 0 5px 5px;
  overflow: hidden;
  border: 1px solid #c9cbd0;
  border-right: 0;
}
.message-list {
  position: absolute;
  bottom: 0;
  left: 3px;
  white-space: nowrap;
}
.status {
  flex: none;
  height: 40px;
  padding-left: 55%;
  padding-top: 14px;
  box-sizing: border-box;
}
.status span {
  display: block;
  margin-left: 14px;
}

/* Dialog */
.dialog {
  position: absolute;
  left: 684px;
  top: 313px;
  display: flex;
  flex-direction: column;
  box-sizing: border-box;
  width: 457px;
  border: 1px solid #b5b5b8;
  border-radius: 9px;
  overflow: hidden;
  background: #fff;
  box-shadow: 0 26px 44px rgba(0, 0, 0, 0.34), 0 0 12px rgba(0, 0, 0, 0.12);
}
.dialog-bar {
  display: flex;
  align-items: center;
  gap: 7px;
  height: 37px;
  padding: 0 14px 0 9px;
  background: linear-gradient(100deg, #f3f2f2, #f7f1ee 50%, #f9f0ee);
}
.dialog-bar button {
  margin-left: auto;
}
.dialog h3 {
  padding: 15px 0 0 17px;
  color: #3a8fd0;
  font-family: 'Open Sans', 'Noto Sans', sans-serif;
  font-size: 18px;
  line-height: 26px;
  white-space: nowrap;
}
.dialog pre {
  padding: 22px 0 0 18px;
}
.dialog-foot {
  display: flex;
  align-items: center;
  justify-content: space-between;
  padding: 10px 11px 7px 20px;
}
.dialog-foot a {
  color: #0a6acb;
}
.dialog-foot button {
  width: 88px;
  height: 26px;
  border: 1px solid #0078d7;
  background: #ddd;
}
</style>
